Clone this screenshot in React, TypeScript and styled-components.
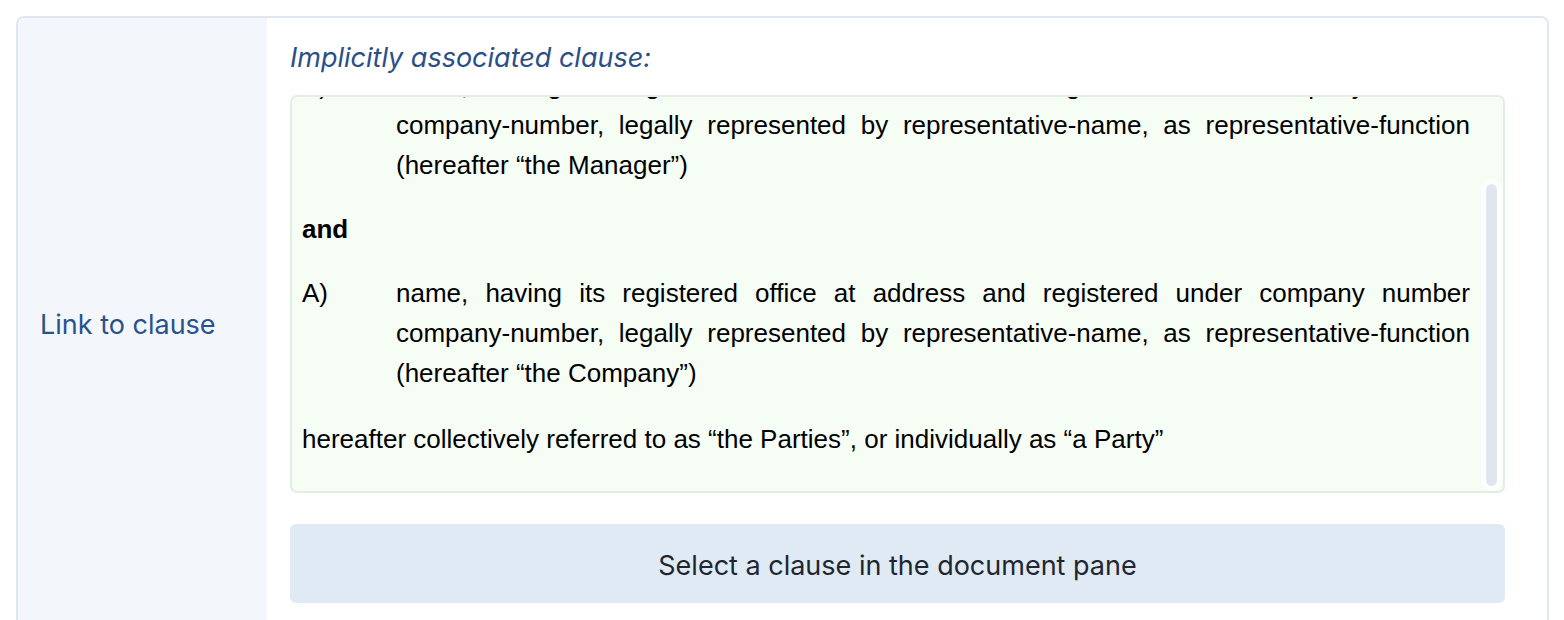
import React, { useLayoutEffect, useRef, useState } from 'react'
import styled, { createGlobalStyle } from 'styled-components'

const GlobalStyle = createGlobalStyle`
  html, body {
    margin: 0;
    padding: 0;
    background: #ffffff;
  }

  body {
    padding: 16px;
    font-family: Inter, "Noto Sans", sans-serif;
  }
`

type Party = {
  marker: string
  before: string
  number: string
  after: string
}

const parties: Party[] = [
  {
    marker: 'A)',
    before:
      'name, having its registered office at address and registered under company number ',
    number: 'company-number',
    after:
      ', legally represented by representative-name, as representative-function (hereafter \u201cthe Manager\u201d)',
  },
  {
    marker: 'A)',
    before:
      'name, having its registered office at address and registered under company number ',
    number: 'company-number',
    after:
      ', legally represented by representative-name, as representative-function (hereafter \u201cthe Company\u201d)',
  },
]

const PartyBlock: React.FC<{ party: Party }> = ({ party }) => (
  <PartyRow>
    <Marker>{party.marker}</Marker>
    <PartyText>
      {party.before}
      <NoBreak>{party.number}</NoBreak>
      {party.after}
    </PartyText>
  </PartyRow>
)

const ClauseText: React.FC = () => {
  const scrollRef = useRef<HTMLDivElement>(null)
  const [thumb, setThumb] = useState({ top: 0, height: 0 })

  useLayoutEffect(() => {
    const el = scrollRef.current
    if (!el) return
    el.scrollTop = el.scrollHeight
    const ratio = el.clientHeight / el.scrollHeight
    setThumb({
      top: el.scrollTop * ratio,
      height: el.clientHeight * ratio,
    })
  }, [])

  return (
    <ClauseBox>
      <ClauseScroll ref={scrollRef}>
        <Heading>between</Heading>
        <PartyBlock party={parties[0]} />
        <Heading>and</Heading>
        <PartyBlock party={parties[1]} />
        <Paragraph>
          hereafter collectively referred to as {'\u201c'}the Parties{'\u201d'}, or
          individually as {'\u201c'}a Party{'\u201d'}
        </Paragraph>
      </ClauseScroll>
      {thumb.height < 394 && (
        <ScrollThumb style={{ top: thumb.top, height: thumb.height }} />
      )}
    </ClauseBox>
  )
}

const App: React.FC = () => (
  <>
    <GlobalStyle />
    <Card>
      <LabelCell>
        <FieldLabel>Link to clause</FieldLabel>
      </LabelCell>

      <ValueCell>
        <Caption>Implicitly associated clause:</Caption>
        <ClauseText />
        <SelectButton type="button">Select a clause in the document pane</SelectButton>
      </ValueCell>
    </Card>
  </>
)

const Card = styled.div`
  display: grid;
  grid-template-columns: 249px 1fr;
  border: 2px solid #dfe8f1;
  border-radius: 8px;
  overflow: hidden;
  width: 1529px;
  box-sizing: content-box;
`

const LabelCell = styled.div`
  display: flex;
  align-items: center;
  padding-left: 22px;
  background: #f3f7fc;
`

const FieldLabel = styled.span`
  font-size: 27px;
  color: #2a528a;
`

const ValueCell = styled.div`
  display: flex;
  flex-direction: column;
  padding: 22px 42px 27px 23px;
  background: #ffffff;
`

const Caption = styled.div`
  font-size: 27px;
  line-height: 36px;
  font-style: italic;
  color: #2a4f86;
  margin-bottom: 19px;
`

const ClauseBox = styled.div`
  position: relative;
  border: 2px solid #e3eee3;
  border-radius: 7px;
  background: #f6fdf5;
  overflow: hidden;
`

const ClauseScroll = styled.div`
  height: 394px;
  overflow-y: scroll;
  scrollbar-width: none;
  box-sizing: border-box;
  padding: 8px 33px 8px 10px;
  font-family: "Liberation Sans", Arial, sans-serif;
  font-size: 26px;
  line-height: 40px;
  color: #000000;

  &::-webkit-scrollbar {
    display: none;
  }
`

const ScrollThumb = styled.div`
  position: absolute;
  right: 1px;
  width: 21px;
  box-sizing: border-box;
  border: 5px solid rgba(255, 255, 255, 0.75);
  border-radius: 11px;
  background-color: #e0e6ef;
  background-clip: padding-box;
`

const Heading = styled.p`
  margin: 0 0 24px;
  font-weight: 700;
`

const PartyRow = styled.div`
  display: grid;
  grid-template-columns: 94px 1fr;
  margin-bottom: 24px;
`

const Marker = styled.span``

const PartyText = styled.span`
  text-align: justify;
`

const NoBreak = styled.span`
  white-space: nowrap;
`

const Paragraph = styled.p`
  margin: 26px 0 24px;
`

const SelectButton = styled.button`
  margin-top: 31px;
  height: 79px;
  padding-top: 4px;
  border: none;
  border-radius: 6px;
  background: #e0eaf4;
  color: #1e2632;
  font-family: Inter, "Noto Sans", sans-serif;
  font-size: 27px;
  cursor: pointer;
`

export default App
